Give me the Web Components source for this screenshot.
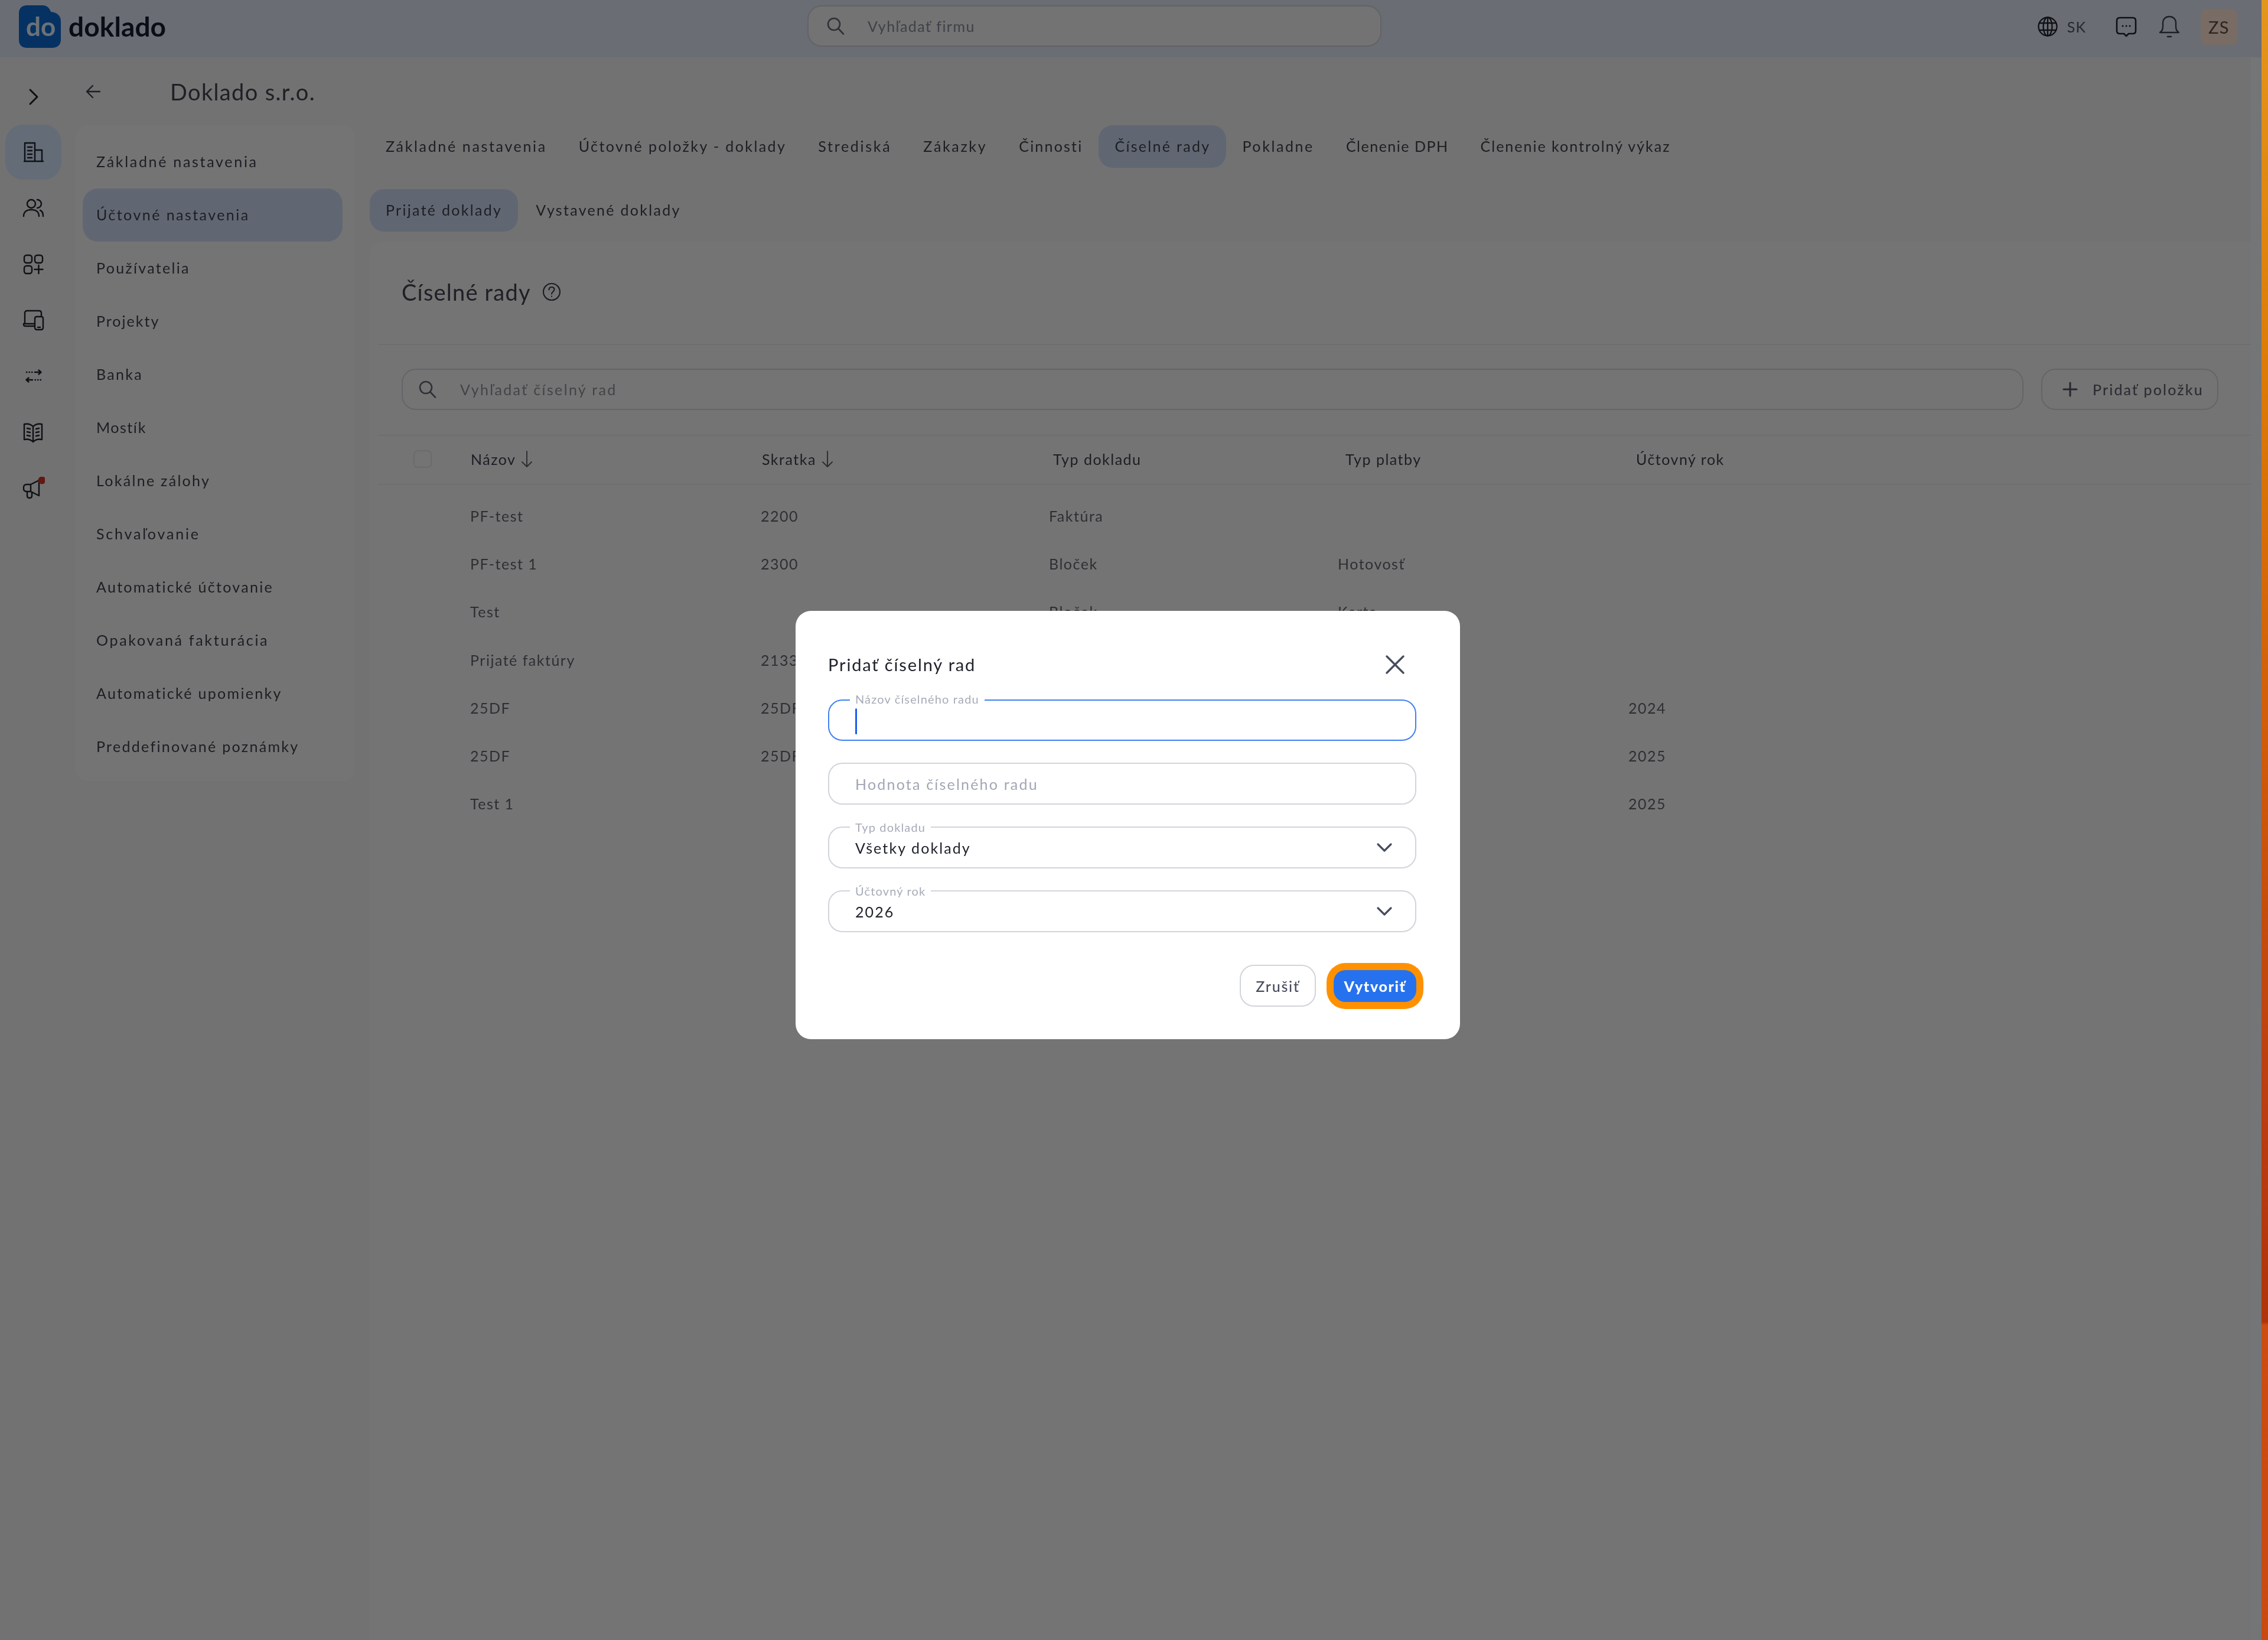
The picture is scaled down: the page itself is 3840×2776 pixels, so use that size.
<!DOCTYPE html>
<html lang="sk">
<head>
<meta charset="utf-8">
<title>Doklado</title>
<style>
html,body{margin:0;padding:0;}
body{width:3840px;height:2776px;overflow:hidden;font-family:"Lato","Noto Sans",sans-serif;}
</style>
</head>
<body>
<doc-app>
  <doc-topbar slot="top"></doc-topbar>
  <doc-rail slot="rail"></doc-rail>
  <doc-nav slot="nav">
    <doc-nav-item style="letter-spacing:2.7px">Základné nastavenia</doc-nav-item>
    <doc-nav-item active style="letter-spacing:2.45px">Účtovné nastavenia</doc-nav-item>
    <doc-nav-item>Používatelia</doc-nav-item>
    <doc-nav-item style="letter-spacing:2px">Projekty</doc-nav-item>
    <doc-nav-item>Banka</doc-nav-item>
    <doc-nav-item style="letter-spacing:1.5px">Mostík</doc-nav-item>
    <doc-nav-item>Lokálne zálohy</doc-nav-item>
    <doc-nav-item style="letter-spacing:2.8px">Schvaľovanie</doc-nav-item>
    <doc-nav-item>Automatické účtovanie</doc-nav-item>
    <doc-nav-item style="letter-spacing:2.7px">Opakovaná fakturácia</doc-nav-item>
    <doc-nav-item>Automatické upomienky</doc-nav-item>
    <doc-nav-item>Preddefinované poznámky</doc-nav-item>
  </doc-nav>
  <doc-tabs slot="tabs">
    <doc-tab style="letter-spacing:2.65px">Základné nastavenia</doc-tab>
    <doc-tab style="letter-spacing:2.4px">Účtovné položky - doklady</doc-tab>
    <doc-tab style="letter-spacing:2.7px">Strediská</doc-tab>
    <doc-tab style="letter-spacing:2.65px">Zákazky</doc-tab>
    <doc-tab style="letter-spacing:2.2px">Činnosti</doc-tab>
    <doc-tab active>Číselné rady</doc-tab>
    <doc-tab style="letter-spacing:2.6px">Pokladne</doc-tab>
    <doc-tab style="letter-spacing:1.5px">Členenie DPH</doc-tab>
    <doc-tab style="letter-spacing:2px">Členenie kontrolný výkaz</doc-tab>
  </doc-tabs>
  <doc-tabs slot="subtabs" style="gap:3px">
    <doc-tab active>Prijaté doklady</doc-tab>
    <doc-tab>Vystavené doklady</doc-tab>
  </doc-tabs>
  <doc-card slot="card"></doc-card>
</doc-app>

<doc-modal>
  <doc-field label="Názov číselného radu" focused></doc-field>
  <doc-field placeholder="Hodnota číselného radu"></doc-field>
  <doc-field label="Typ dokladu" value="Všetky doklady" select></doc-field>
  <doc-field label="Účtovný rok" value="2026" select></doc-field>
</doc-modal>

<script>
// icons used in more than one place
const searchIcon = `<svg width="34" height="34" viewBox="0 0 34 34" fill="none" stroke="currentColor" stroke-width="2.6" stroke-linecap="round"><circle cx="14" cy="14" r="10"/><path d="M21.500 21.500l8.500 9"/></svg>`;

class DocApp extends HTMLElement{
  constructor(){
    super();
    this.attachShadow({mode:"open"}).innerHTML = `
    <style>
    :host{display:flex;width:3840px;height:2776px;background:#c8500e;}
    .app{width:3829px;height:2776px;display:flex;flex-direction:column;background:#e4e4e4;box-shadow:inset -18px 0 0 #e9ebee;filter:blur(.6px);}
    .strip{flex:1;background:linear-gradient(180deg,#e2961e 0,#dc7c08 22%,#d05c08 45%,#bc4010 65%,#b0340a 80.6%,#cc4c12 80.8%,#c84a12 100%);}
    .below{flex:1;display:flex;min-height:0;}
    .page{flex:1;display:flex;flex-direction:column;min-width:0;}
    .head{height:115px;display:flex;align-items:center;flex:none;box-sizing:border-box;padding:0 0 0 17px;}
    .head svg{display:block;}
    .head h1{margin:0 0 0 117px;font-size:38px;font-weight:400;letter-spacing:1.35px;color:#3e414c;}
    .cols{flex:1;display:flex;min-height:0;}
    .navcol{width:498px;flex:none;}
    .main{flex:1;min-width:0;display:flex;flex-direction:column;}
    .sub{margin-top:36px;}
    </style>
    <div class="app">
      <slot name="top"></slot>
      <div class="below">
        <slot name="rail"></slot>
        <div class="page">
          <div class="head">
            <svg width="26" height="26" viewBox="0 0 26 26" fill="none" stroke="#3a3d48" stroke-width="2.4" stroke-linecap="round" stroke-linejoin="round"><path d="M24 13H2M12 3L2 13l10 10"/></svg>
            <h1>Doklado s.r.o.</h1>
          </div>
          <div class="cols">
            <div class="navcol"><slot name="nav"></slot></div>
            <div class="main">
              <slot name="tabs"></slot>
              <div class="sub"><slot name="subtabs"></slot></div>
              <slot name="card"></slot>
            </div>
          </div>
        </div>
      </div>
    </div>
    <div class="strip"></div>`;
  }
}

class DocTopbar extends HTMLElement{
  constructor(){
    super();
    this.attachShadow({mode:"open"}).innerHTML = `
    <style>
    :host{display:flex;align-items:center;height:97px;box-sizing:border-box;padding-bottom:7px;flex:none;background:#d4dbe7;color:#2a2d38;position:relative;}
    .left{width:1367px;flex:none;display:flex;align-items:center;box-sizing:border-box;padding-left:32px;}
    .word{margin-left:13px;font-size:46px;font-weight:700;color:#151b2e;letter-spacing:.1px;line-height:1;}
    .search{width:972px;height:70px;flex:none;margin-top:-2px;box-sizing:border-box;border:2px solid #c2c6d0;background:#e6e6e6;border-radius:24px;display:flex;align-items:center;padding-left:29px;color:#5c6170;}
    .search span{margin-left:37px;font-size:25px;letter-spacing:1.45px;color:#7e8391;}
    .right{flex:1;display:flex;align-items:center;justify-content:flex-end;padding-right:41px;}
    .sk{font-size:25px;margin:0 50px 0 16px;color:#4c505c;letter-spacing:1px;}
    .avatar{width:62px;height:61px;border-radius:10px;background:#f0d8c8;display:flex;align-items:center;justify-content:center;font-size:29px;letter-spacing:1.5px;color:#56483f;margin-left:35px;}
    svg{display:block;flex:none;}
    .do{position:absolute;left:44px;top:22px;font:700 44px/1 Lato,sans-serif;color:#d8e2ee;}
    </style>
    <div class="left">
      <svg width="71" height="72" viewBox="0 0 71 72"><path d="M14 0H40C48 0 52 5 54 11C64 12 71 17 71 27V58C71 67 65 72 56 72H14C5 72 0 67 0 58V14C0 5 5 0 14 0Z" fill="#0a64c4"/></svg>
      <span class="word">doklado</span>
    </div>
    <div class="search">${searchIcon}<span>Vyhľadať firmu</span></div>
    <div class="right">
      <svg width="34" height="34" viewBox="0 0 34 34" fill="none" stroke="#1d2029" stroke-width="2.3"><circle cx="17" cy="17" r="15.500"/><ellipse cx="17" cy="17" rx="7.500" ry="15.500"/><path d="M3 11h28M3 23h28M17 2v30"/></svg>
      <span class="sk">SK</span>
      <svg width="36" height="36" viewBox="0 0 36 36" fill="none" stroke="#1d2029" stroke-width="2.6" stroke-linejoin="round"><path d="M7 3h22q5 0 5 5v17q0 5-5 5h-7l-4 4-4-4H7q-5 0-5-5V8q0-5 5-5z"/><path d="M12 17h.1M18 17h.1M24 17h.1" stroke-width="3" stroke-linecap="round"/></svg>
      <svg width="36" height="38" viewBox="0 0 36 38" fill="none" stroke="#3c404c" stroke-width="2.4" stroke-linecap="round" stroke-linejoin="round" style="margin-left:37px"><path d="M2 29q5-3 5-10v-6C7 6 12 2 18 2s11 4 11 11v6q0 7 5 10z"/><path d="M15 36h6"/></svg>
      <div class="avatar">ZS</div>
    </div>
    <span class="do">do</span>`;
  }
}

class DocRail extends HTMLElement{
  constructor(){
    super();
    const s = `fill="none" stroke="#1d2029" stroke-width="2.4" stroke-linecap="round" stroke-linejoin="round"`;
    const icons = [
      `<path d="M4 34V3h17v31M3 34h32M21 15h12v19M9 10h7M9 16h7M9 22h7M9 28h7"/>`,
      `<circle cx="15" cy="11" r="7"/><path d="M25 4a7 7 0 0 1 0 14M2 32c0-8 6-11 13-11s13 3 13 11M30 22c3 1 5 5 5 10"/>`,
      `<rect x="3" y="3" width="13" height="13" rx="4"/><rect x="21" y="3" width="13" height="13" rx="4"/><rect x="3" y="21" width="13" height="13" rx="4"/><path d="M27.500 20v14M20.500 27h14"/>`,
      `<path d="M4 25V7q0-4 4-4h20q4 0 4 4v5M20 29H5q-3 0-3-3v-1h18"/><rect x="21" y="13" width="14" height="22" rx="3"/><path d="M26 31h4"/>`,
      `<path d="M7 12h.5M11.500 12h.5M16 12h.5M21 12h10M27.500 8.500l4 3.500-4 3.500M31 25h-.5M26.500 25h-.5M22 25h-.5M17 25H7M10.500 21.500l-4 3.500 4 3.500"/>`,
      `<path d="M18 9C14 5 8 4 3 5v26c5-1 11 0 15 4 4-4 10-5 15-4V5c-5-1-11 0-15 4zM18 9v26M8 12l5 1M8 18l5 1M8 24l5 1M23 13l5-1M23 19l5-1M23 25l5-1"/>`,
      `<path d="M28 6v26L14 25H7q-5 0-5-5v-2q0-5 5-5h7zM14 13v12M8 25v7q0 4 4 4t4-4v-6"/><circle cx="33" cy="6" r="6.500" fill="#c23226" stroke="none"/>`
    ];
    this.attachShadow({mode:"open"}).innerHTML = `
    <style>
    :host{display:block;width:128px;flex:none;}
    .chev{height:114px;display:flex;justify-content:center;align-items:flex-start;padding:51px 15px 0 0;box-sizing:border-box;}
    .cell{height:94.700px;width:95px;margin-left:9px;display:flex;align-items:center;justify-content:center;border-radius:30px;}
    .cell.on{background:#c8d8ee;height:93px;margin-bottom:1.700px;}
    svg{display:block;}
    </style>
    <div class="chev"><svg width="20" height="32" viewBox="0 0 20 32" fill="none" stroke="#1d2029" stroke-width="3" stroke-linecap="round" stroke-linejoin="round"><path d="M4 4l12 12L4 28"/></svg></div>
    ${icons.map((p,i)=>`<div class="cell ${i==0?"on":""}"><svg width="38" height="38" viewBox="0 0 38 38" ${s}>${p}</svg></div>`).join("")}`;
  }
}

class DocNav extends HTMLElement{
  constructor(){
    super();
    this.attachShadow({mode:"open"}).innerHTML = `
    <style>
    :host{display:block;width:472px;box-sizing:border-box;padding:17px 20px 13px 12px;background:#e8e8e8;border-radius:20px;}
    </style>
    <slot></slot>`;
  }
}

class DocNavItem extends HTMLElement{
  constructor(){
    super();
    this.attachShadow({mode:"open"}).innerHTML = `
    <style>
    :host{display:flex;align-items:center;height:90px;box-sizing:border-box;padding:0 0 3px 23px;font-size:25px;letter-spacing:2.3px;color:#3a3d48;border-radius:26px;white-space:nowrap;}
    :host([active]){background:#c2cfe4;}
    </style>
    <slot></slot>`;
  }
}

class DocTabs extends HTMLElement{
  constructor(){
    super();
    this.attachShadow({mode:"open"}).innerHTML = `
    <style>
    :host{display:flex;height:72px;}
    </style>
    <slot></slot>`;
  }
}

class DocTab extends HTMLElement{
  constructor(){
    super();
    this.attachShadow({mode:"open"}).innerHTML = `
    <style>
    :host{display:flex;align-items:center;box-sizing:border-box;padding:0 27px 3px;font-size:25px;letter-spacing:2.3px;color:#3a3d48;border-radius:24px;white-space:nowrap;}
    :host([active]){background:#c2cfe4;}
    </style>
    <slot></slot>`;
  }
}

class DocCard extends HTMLElement{
  constructor(){
    super();
    const head = ["Názov","Skratka","Typ dokladu","Typ platby","Účtovný rok"];
    const rows = [
      ["PF-test","2200","Faktúra","",""],
      ["PF-test 1","2300","Bloček","Hotovosť",""],
      ["Test","","Bloček","Karta",""],
      ["Prijaté faktúry","2133","","",""],
      ["25DF","25DF","","","2024"],
      ["25DF","25DF","","","2025"],
      ["Test 1","","","","2025"]
    ];
    const arrow = `<svg width="20" height="30" viewBox="0 0 20 30" fill="none" stroke="#5b5e68" stroke-width="2" stroke-linecap="round" stroke-linejoin="round"><path d="M10 2v26M2 20l8 8 8-8"/></svg>`;
    this.attachShadow({mode:"open"}).innerHTML = `
    <style>
    :host{display:block;flex:1;background:#e8e8e8;margin:18px 18px 0 0;color:#3a3d48;border-radius:20px 0 0 0;}
    .title{display:flex;align-items:center;height:172px;box-sizing:border-box;padding:0 0 4px 54px;}
    .title h2{margin:0;font-size:38px;font-weight:400;letter-spacing:1.2px;color:#3e414c;}
    .title svg{margin-left:19px;}
    hr{margin:0 0 0 14px;border:0;height:2px;background:#dcdcdc;}
    .tools{display:flex;gap:30px;height:70px;padding:40px 55px 42px 54px;}
    .find{flex:1;display:flex;align-items:center;box-sizing:border-box;border:2px solid #c9cbd0;border-radius:24px;padding-left:25px;color:#5c6170;}
    .find span{margin-left:38px;font-size:25px;letter-spacing:2.35px;color:#85888f;}
    .add{width:300px;box-sizing:border-box;border:2px solid #c9cbd0;border-radius:24px;display:flex;align-items:center;padding-left:34px;font-size:25px;font-weight:500;letter-spacing:2.1px;color:#585c68;}
    .add svg{margin-right:25px;}
    .thead{display:grid;grid-template-columns:171px 493px 493px 495px 492px 1fr;height:81px;box-sizing:border-box;padding-bottom:3px;align-items:center;font-size:25px;letter-spacing:1.5px;}
    .thead>div{display:flex;align-items:center;gap:9px;}
    .box{width:31px;height:30px;box-sizing:border-box;border:2px solid #d6d7da;border-radius:7px;margin-left:74px;}
    .tbody{padding-top:13px;}
    .row{display:grid;grid-template-columns:170px 492px 488px 489px 492px 1fr;height:81.200px;box-sizing:border-box;padding-bottom:3px;align-items:center;font-size:25px;letter-spacing:1.5px;color:#5c5f69;}
    </style>
    <div class="title">
      <h2>Číselné rady</h2>
      <svg width="32" height="32" viewBox="0 0 32 32" fill="none" stroke="#3a3d48" stroke-width="2.200" stroke-linecap="round"><circle cx="16" cy="16" r="14"/><path d="M11.500 12.500c0-3 2-4.500 4.500-4.500s4.500 1.500 4.500 4c0 3.500-4.500 4-4.500 7.500M16 23.500v.2"/></svg>
    </div>
    <hr>
    <div class="tools">
      <div class="find">${searchIcon}<span>Vyhľadať číselný rad</span></div>
      <div class="add"><svg width="26" height="26" viewBox="0 0 26 26" fill="none" stroke="#4a4e5c" stroke-width="3" stroke-linecap="round"><path d="M13 2v22M2 13h22"/></svg>Pridať položku</div>
    </div>
    <hr>
    <div class="thead">
      <div><div class="box"></div></div>
      ${head.map((h,i)=>`<div>${h}${i<2?arrow:""}</div>`).join("")}
    </div>
    <hr>
    <div class="tbody">
      ${rows.map(r=>`<div class="row"><div></div>${r.map(c=>`<div>${c}</div>`).join("")}</div>`).join("")}
    </div>`;
  }
}

class DocField extends HTMLElement{
  constructor(){
    super();
    this.attachShadow({mode:"open"});
  }
  connectedCallback(){
    const label = this.getAttribute("label");
    const value = this.getAttribute("value");
    const holder = this.getAttribute("placeholder");
    this.shadowRoot.innerHTML = `
    <style>
    :host{display:block;position:relative;height:71px;box-sizing:border-box;border:2px solid #d2d4dc;border-radius:24px;background:#fff;}
    :host([focused]){border-color:#3d80f5;height:70px;}
    .inner{display:flex;align-items:center;height:100%;padding:1px 38px 0 44px;box-sizing:border-box;font-size:25px;letter-spacing:2.1px;color:#20222c;}
    .holder{color:#a2a6b4;letter-spacing:2.2px;}
    .label{position:absolute;left:35px;top:-13px;padding:0 9px;background:#fff;font-size:20px;letter-spacing:1.15px;line-height:24px;color:#a7abb8;white-space:nowrap;}
    :host([focused]) .label{top:-15px;}
    .caret{width:3px;height:44px;background:#1a5cf0;border-radius:2px;margin-top:3px;}
    .grow{flex:1;}
    svg{display:block;}
    </style>
    ${label?`<span class="label">${label}</span>`:""}
    <div class="inner">
      ${this.hasAttribute("focused")?`<div class="caret"></div>`:""}
      ${holder?`<span class="holder">${holder}</span>`:""}
      ${value?`<span>${value}</span>`:""}
      <div class="grow"></div>
      ${this.hasAttribute("select")?`<svg width="28" height="18" viewBox="0 0 28 18" fill="none" stroke="#474c5e" stroke-width="3.200" stroke-linecap="round" stroke-linejoin="round"><path d="M3 3l11 11L25 3"/></svg>`:""}
    </div>`;
  }
}

class DocModal extends HTMLElement{
  constructor(){
    super();
    this.attachShadow({mode:"open"}).innerHTML = `
    <style>
    :host{position:absolute;left:0;top:0;width:3829px;height:2776px;background:rgba(0,0,0,.5);display:block;}
    .dialog{position:absolute;left:1347px;top:1034px;width:1125px;height:725px;box-sizing:border-box;background:#fff;border-radius:26px;padding:70px 74px 55px 55px;filter:blur(.5px);}
    .title{display:flex;justify-content:space-between;align-items:center;height:44px;box-sizing:border-box;padding-bottom:3px;margin-bottom:36px;font-size:29px;letter-spacing:1.85px;color:#20222c;}
    .title svg{margin:0 18px 0 0;}
    .fields{display:flex;flex-direction:column;gap:37px;}
    .actions{display:flex;justify-content:flex-end;align-items:center;gap:30px;height:71px;margin-top:55px;}
    .cancel{width:129px;height:71px;box-sizing:border-box;border:2px solid #d2d4dc;border-radius:24px;display:flex;align-items:center;justify-content:center;font-size:25px;font-weight:500;letter-spacing:1.8px;color:#484c5e;}
    .ok{width:140px;height:54px;border-radius:20px;background:#2672ee;box-shadow:0 0 0 12px #ff9100;display:flex;align-items:center;justify-content:center;font-size:25px;font-weight:900;letter-spacing:1.6px;color:#fff;}
    </style>
    <div class="dialog">
      <div class="title">
        <span>Pridať číselný rad</span>
        <svg width="36" height="36" viewBox="0 0 36 36" fill="none" stroke="#474c5e" stroke-width="3.400" stroke-linecap="round"><path d="M4 4l28 28M32 4L4 32"/></svg>
      </div>
      <div class="fields"><slot></slot></div>
      <div class="actions">
        <div class="cancel">Zrušiť</div>
        <div class="ok">Vytvoriť</div>
      </div>
    </div>`;
  }
}

customElements.define("doc-app",DocApp);
customElements.define("doc-topbar",DocTopbar);
customElements.define("doc-rail",DocRail);
customElements.define("doc-nav",DocNav);
customElements.define("doc-nav-item",DocNavItem);
customElements.define("doc-tabs",DocTabs);
customElements.define("doc-tab",DocTab);
customElements.define("doc-card",DocCard);
customElements.define("doc-field",DocField);
customElements.define("doc-modal",DocModal);
</script>
</body>
</html>
